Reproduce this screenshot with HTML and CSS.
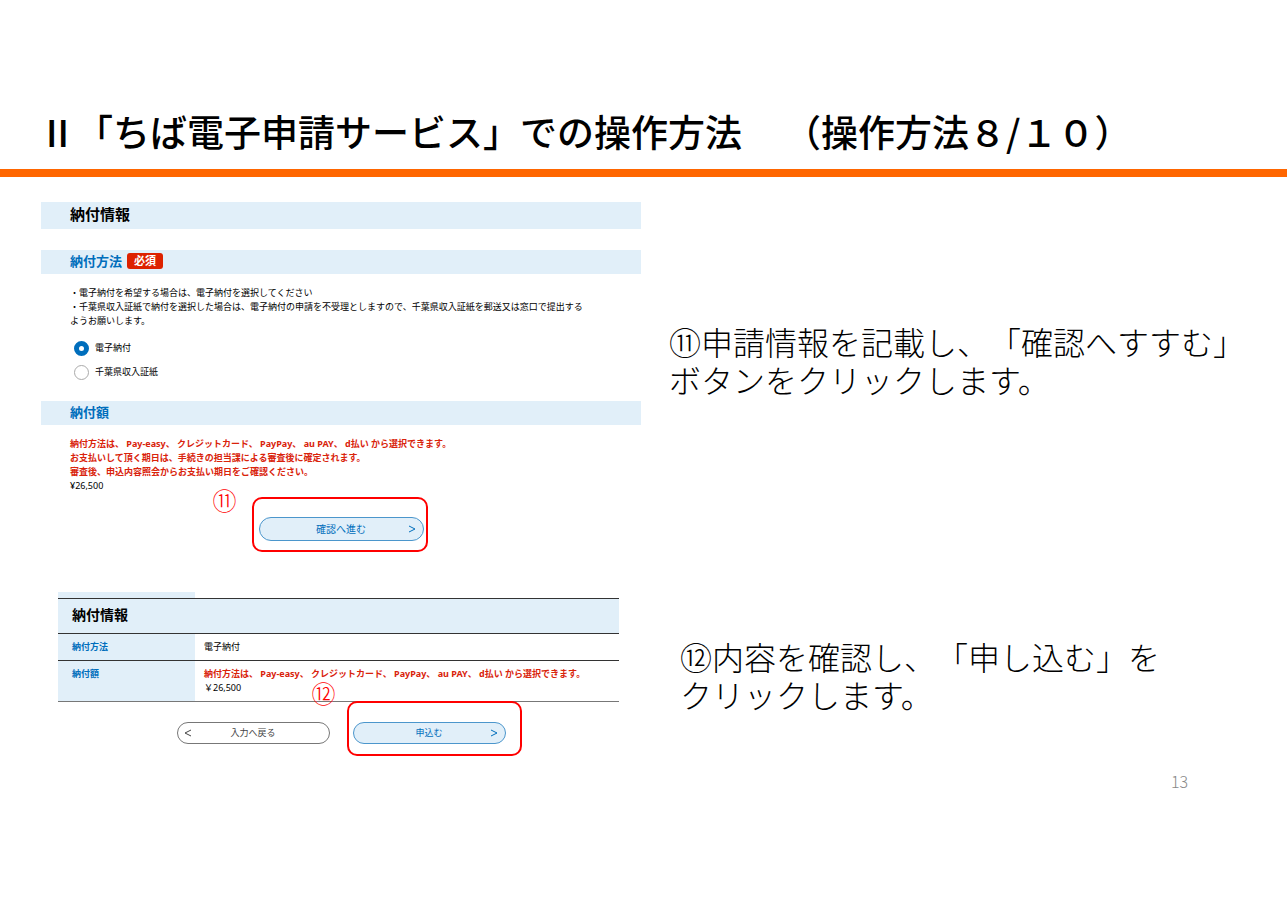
FILE: index.html
```html
<!DOCTYPE html>
<html lang="ja">

<head>
    <meta charset="utf-8">
    <meta name="viewport" content="width=device-width, initial-scale=1">
    <title>「ちば電子申請サービス」での操作方法</title>
    <link rel="stylesheet" href="styles.css">
</head>

<body>
    <header>
        <h1><span>Ⅱ「ちば電子申請サービス」での操作方法</span><span>（操作方法８/１０）</span></h1>
    </header>

    <main>
        <!-- input screen -->
        <form class="screen">
            <h2 class="band band-title">納付情報</h2>

            <h3 class="band">納付方法<span class="required">必須</span></h3>
            <div class="content">
                <p>・電子納付を希望する場合は、電子納付を選択してください<br>
                ・千葉県収入証紙で納付を選択した場合は、電子納付の申請を不受理としますので、千葉県収入証紙を郵送又は窓口で提出する<br>
                ようお願いします。</p>
                <div class="options">
                    <label><input type="radio" name="method" checked>電子納付</label>
                    <label><input type="radio" name="method">千葉県収入証紙</label>
                </div>
            </div>

            <h3 class="band">納付額</h3>
            <div class="content">
                <p class="notice">納付方法は、 Pay-easy、 クレジットカード、 PayPay、 au PAY、 d払い から選択できます。<br>
                お支払いして頂く期日は、手続きの担当課による審査後に確定されます。<br>
                審査後、申込内容照会からお支払い期日をご確認ください。</p>
                <p>¥26,500</p>
            </div>

            <div class="actions">
                <div class="callout callout-confirm">
                    <span class="marker">⑪</span>
                    <button type="button" class="primary">確認へ進む<svg viewBox="0 0 8 8"><path d="M1 1 L7 4 L1 7"/></svg></button>
                </div>
            </div>
        </form>
        <p class="caption">⑪申請情報を記載し、「確認へすすむ」<br>ボタンをクリックします。</p>

        <!-- confirmation screen -->
        <div class="screen">
            <table>
                <thead>
                    <tr class="cut"><th></th><td></td></tr>
                    <tr><th colspan="2" class="table-title">納付情報</th></tr>
                </thead>
                <tbody>
                    <tr>
                        <th>納付方法</th>
                        <td>電子納付</td>
                    </tr>
                    <tr>
                        <th>納付額</th>
                        <td>
                            <p class="notice">納付方法は、 Pay-easy、 クレジットカード、 PayPay、 au PAY、 d払い から選択できます。</p>
                            <p>￥26,500</p>
                        </td>
                    </tr>
                </tbody>
            </table>

            <div class="actions">
                <button type="button"><svg class="back" viewBox="0 0 8 8"><path d="M7 1 L1 4 L7 7"/></svg>入力へ戻る</button>
                <div class="callout callout-apply">
                    <span class="marker">⑫</span>
                    <button type="button" class="primary">申込む<svg viewBox="0 0 8 8"><path d="M1 1 L7 4 L1 7"/></svg></button>
                </div>
            </div>
        </div>
        <p class="caption caption-apply">⑫内容を確認し、「申し込む」を<br>クリックします。</p>
    </main>

    <footer>13</footer>
</body>

</html>
```
FILE: styles.css
```css
* {
    box-sizing: border-box;
}
body {
    margin: 0;
    background-color: #fff;
    color: #000;
    font-family: "Noto Sans CJK JP", sans-serif;
    text-spacing-trim: space-all;
}
h1, h2, h3, p {
    margin: 0;
}

header {
    padding: 103px 39px 10px;
    border-bottom: 8px solid #ff6600;
}
h1 {
    display: flex;
    gap: 42px;
    font-size: 37px;
    font-weight: 500;
    line-height: 56px;
    white-space: nowrap;
}

main {
    display: grid;
    grid-template-columns: 600fr 617fr;
    column-gap: 28px;
    row-gap: 40px;
    padding: 25px 1px 0 41px;
}
.screen {
    font-family: "Noto Sans", "Noto Sans CJK JP", sans-serif;
}

/* blue section bars */
.band {
    display: flex;
    align-items: center;
    height: 24px;
    padding: 0 0 3px 29px;
    background-color: #e1eff9;
    color: #006ebc;
    font-size: 13px;
    font-weight: 700;
    line-height: 20px;
}
.band-title {
    height: 27px;
    margin-bottom: 21px;
    color: #000;
    font-size: 15px;
}
.required {
    width: 36px;
    margin-left: 5px;
    border-radius: 3px;
    background-color: #dd2200;
    color: #fff;
    font-size: 11px;
    line-height: 16px;
    text-align: center;
}
.content {
    padding: 12px 0 0 29px;
    font-size: 9px;
    line-height: 14px;
    white-space: nowrap;
}
.notice {
    color: #d9230b;
    font-weight: 700;
}

.options {
    display: flex;
    flex-direction: column;
    padding: 8px 0 17px 4px;
}
.options label {
    display: flex;
    align-items: center;
    gap: 6px;
    height: 24px;
}
input[type="radio"] {
    appearance: none;
    width: 15px;
    height: 15px;
    margin: 0;
    border: 1px solid #aaa;
    border-radius: 50%;
    background-color: #fff;
}
input[type="radio"]:checked {
    border: 5px solid #006ebc;
}

.actions {
    display: flex;
    justify-content: center;
    gap: 23px;
    padding-top: 20px;
}
button {
    position: relative;
    width: 153px;
    height: 22px;
    padding: 0;
    border: 1px solid #777;
    border-radius: 12px;
    background-color: #fff;
    color: #444;
    font-family: inherit;
    font-size: 9px;
    line-height: 14px;
}
button.primary {
    border-color: #4b96cc;
    background-color: #e1eff9;
    color: #006ebc;
}
button svg {
    position: absolute;
    top: 6px;
    right: 7px;
    width: 8px;
    height: 8px;
    fill: none;
    stroke: currentColor;
}
button svg.back {
    right: auto;
    left: 6px;
}

/* red frame drawn round the button to press */
.callout {
    display: flex;
    position: relative;
}
.callout::before {
    content: "";
    position: absolute;
    inset: -21px -16px -12px -6px;
    border: 2px solid #f00;
    border-radius: 10px;
}
.marker {
    position: absolute;
    top: -40px;
    left: -41px;
    color: #f00;
    font-size: 24px;
    font-weight: 300;
    line-height: 24px;
}
.callout-confirm {
    margin: 4px 0 11px;
}
.callout-confirm::before {
    inset: -20px -4px -11px -7px;
}
.callout-confirm .marker {
    top: -28px;
    left: -46px;
}
.callout-confirm button {
    width: 165px;
    height: 24px;
    font-size: 10px;
}
.callout-confirm svg {
    top: 7px;
}

table {
    width: calc(100% - 39px);
    margin-left: 17px;
    border-collapse: collapse;
    font-size: 9px;
    line-height: 14px;
}
tr {
    border-bottom: 1px solid #333;
}
tbody tr:last-child {
    border-color: #777;
}
th {
    width: 137px;
    padding: 6px 14px;
    background-color: #e1eff9;
    color: #006ebc;
    text-align: left;
    vertical-align: top;
}
td {
    padding: 6px 0 6px 9px;
    white-space: nowrap;
}
.cut th, .cut td {
    height: 6px;
    padding: 0;
}
.table-title {
    padding: 6px 14px 8px;
    color: #000;
    font-size: 14px;
    line-height: 20px;
}

.caption {
    padding-top: 120px;
    font-size: 32px;
    font-weight: 300;
    line-height: 38px;
    white-space: nowrap;
}
.caption-apply {
    padding: 45px 0 0 11px;
}

footer {
    padding: 25px 99px 0 0;
    color: #888;
    font-size: 16px;
    font-weight: 300;
    line-height: 24px;
    text-align: right;
}
```
